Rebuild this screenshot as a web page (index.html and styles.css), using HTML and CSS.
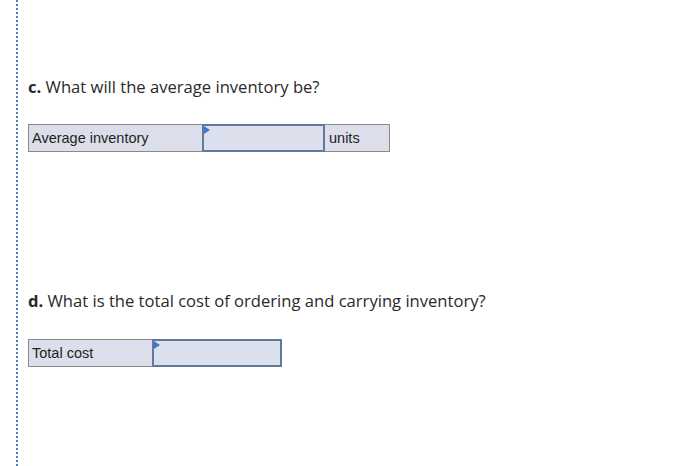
FILE: index.html
```html
<!DOCTYPE html>
<html>
<head>
<meta charset="utf-8">
<link rel="stylesheet" href="styles.css">
</head>
<body>
<div class="page">
  <section class="q q-c">
    <h2 class="prompt"><b>c.</b> What will the average inventory be?</h2>
    <div class="row row-c">
      <div class="cell label w-c">Average inventory</div>
      <div class="cell input w-ci"><span class="flag"></span></div>
      <div class="cell unit">units</div>
    </div>
  </section>
  <section class="q q-d">
    <h2 class="prompt"><b>d.</b> What is the total cost of ordering and carrying inventory?</h2>
    <div class="row row-d">
      <div class="cell label w-d">Total cost</div>
      <div class="cell input w-di"><span class="flag"></span></div>
    </div>
  </section>
</div>
</body>
</html>
```
FILE: styles.css
```css
html, body { margin: 0; padding: 0; background: #fff; }
.page {
  margin-left: 16px;
  border-left: 2px dotted #4f7dc0;
  height: 466px;
  box-sizing: border-box;
  padding-left: 10px;
  padding-top: 77px;
}
.prompt {
  margin: 0;
  font-family: "Open Sans", "Liberation Sans", sans-serif;
  font-weight: 400;
  font-size: 16.6px;
  line-height: 20px;
  color: #2a2a2a;
}
.prompt b { font-weight: 700; }
.row {
  display: flex;
  margin-top: 27px;
  font-family: "Liberation Sans", Arial, sans-serif;
  font-size: 14.5px;
  color: #1e1e1e;
}
.row-d { margin-top: 28px; }
.cell {
  box-sizing: border-box;
  height: 28px;
  background: #dcdfeb;
  border: 1px solid #8a8a8a;
  line-height: 26px;
  padding-left: 3px;
}
.label { border-right: none; }
.w-c { width: 174px; }
.w-d { width: 124px; }
.input {
  position: relative;
  border: 2px solid #62789c;
  background: #dce0ec;
}
.w-ci { width: 123px; }
.w-di { width: 130px; }
.unit { width: 65px; border-left: none; padding-left: 4px; }
.flag {
  position: absolute;
  left: 0; top: 0;
  width: 0; height: 0;
  border-left: 6px solid #3f78c8;
  border-top: 4px solid transparent;
  border-bottom: 4px solid transparent;
}
.q-d { margin-top: 139px; }
```
